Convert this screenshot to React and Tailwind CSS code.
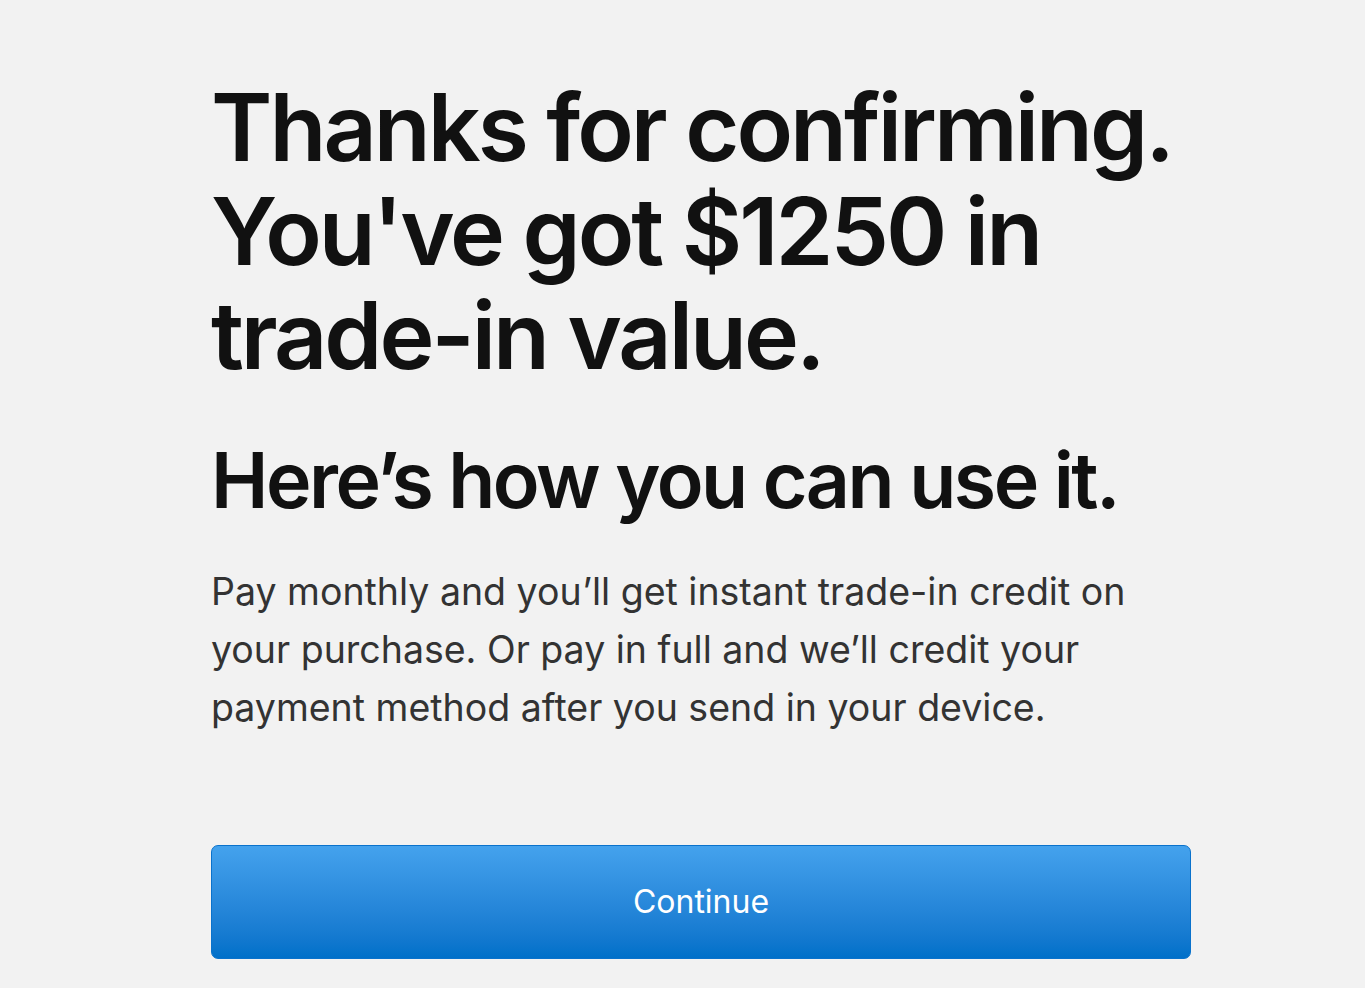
export default function App() {
  return (
    <div className="min-h-screen bg-[#f2f2f2] font-['Inter','Liberation_Sans',sans-serif]">
      <main className="w-[980px] ml-[211px] pt-[75px]">
        <h1 className="whitespace-nowrap text-[93px] leading-[104px] font-semibold tracking-[-0.032em] text-[#111111]">
          Thanks for confirming.
          <br />
          You've got $1250 in
          <br />
          trade-in value.
        </h1>
        <h2 className="mt-[49px] whitespace-nowrap text-[77px] leading-[88px] font-semibold tracking-[-0.032em] text-[#111111]">
          Here’s how you can use it.
        </h2>
        <p className="mt-[39px] text-[37.5px] leading-[58px] text-[#333333] w-[940px]">
          Pay monthly and you’ll get instant trade-in credit on your purchase. Or pay in full and we’ll credit your payment method after you send in your device.
        </p>
        <button className="mt-[108px] w-[980px] h-[114px] rounded-[7px] border border-[#0a72cc] bg-gradient-to-b from-[#44a2ed] to-[#0070c9] text-white text-[32px]">
          Continue
        </button>
      </main>
    </div>
  );
}
